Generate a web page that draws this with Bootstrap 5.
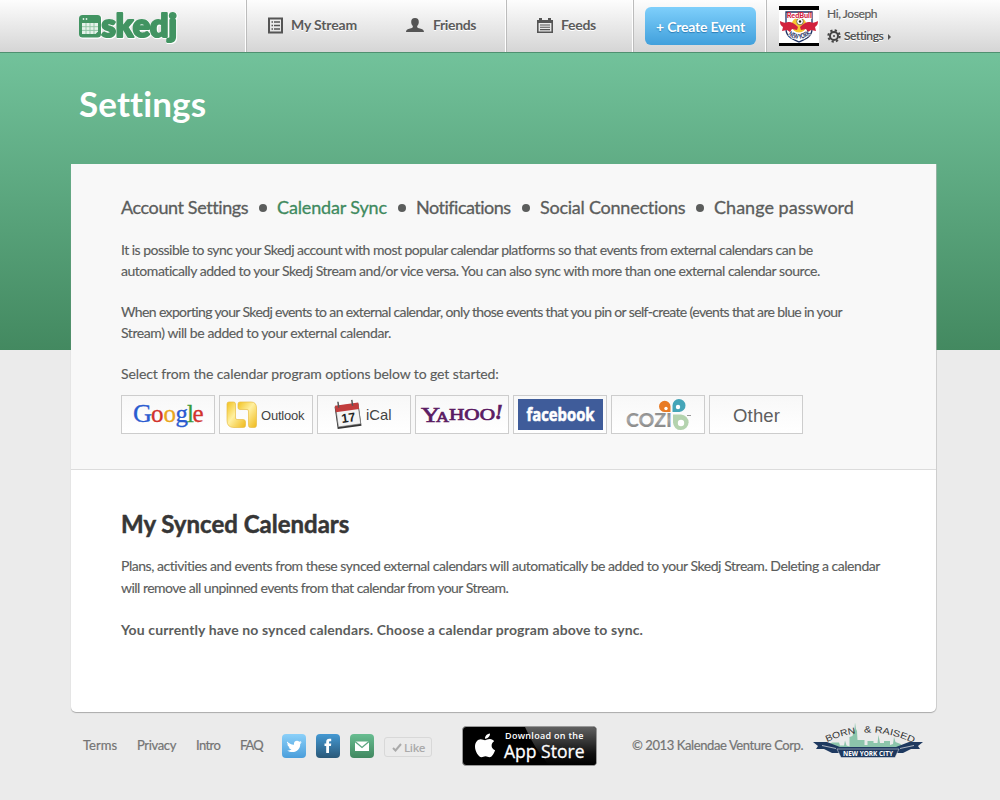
<!DOCTYPE html>
<html lang="en">
<head>
<meta charset="utf-8">
<meta name="viewport" content="width=device-width, initial-scale=1">
<title>Skedj - Settings</title>
<link rel="stylesheet" href="https://cdn.jsdelivr.net/npm/bootstrap@5.3.0/dist/css/bootstrap.min.css">
<style>
body{font-family:Lato,"Open Sans",sans-serif;background:#ebebeb;color:#5b5d5c;font-size:14px;line-height:21px;height:800px;overflow:hidden}
a{color:inherit;text-decoration:none}
svg{display:block;flex:none}
.topbar{height:53px;background:linear-gradient(#fdfdfd,#d5d5d5);border-bottom:1px solid #4f9070}
.brand{width:246px;padding:9px 0 0 78px}
.cell{border-left:1px solid #bcbcbc;box-shadow:-1px 0 0 #fff;font-weight:700;text-shadow:0 1px 0 #fff;color:#5b5b5b;height:52px}
.cell a{padding-top:15px;line-height:19px}
.c1{width:134px;padding-left:21px}.c2{width:126px;padding-left:26px}.c3{width:127px;padding-left:30px}.c4{width:133px;padding:7px 0 0 11px}
.plain{border:0;box-shadow:none}
.create{width:111px;height:38px;border-radius:6px;background:linear-gradient(#7ecffb,#41a0dc);color:#fff;text-shadow:0 1px 1px #2b7db5;font-size:14px;font-weight:700;letter-spacing:-.2px;border:0;padding:0;line-height:37px}
.user{padding:6px 0 0 12px;font-weight:400;font-size:12px;gap:8px}
.user .lh{line-height:15px;height:22px;-webkit-text-stroke:.2px}
.hero{height:297px;background:linear-gradient(#72c29b,#438960);padding:29px 0 0 79px}
.hero h1{font-size:35px;line-height:42px;font-weight:700;color:#fff;margin:0;letter-spacing:.12px}
.panel{width:865px;height:548px;margin:-186px 0 0 71px;background:#fff;border-radius:0 0 5px 5px;box-shadow:0 1px 1px #aaa,1px 0 0 #bbb8;position:relative}
.upper{height:306px;background:#f8f8f8;border-bottom:1px solid #dcdcdc;padding:32px 0 0 50px}
.tabs{font-size:18px;line-height:22px;height:22px;white-space:nowrap;-webkit-text-stroke:.3px}
.tabs a{display:block}
.tabs a.on{color:#3f8a5f}
.tabs i{width:8px;height:8px;border-radius:50%;background:#5b5d5c;margin-top:1px}
.ln{display:block;white-space:nowrap}
.upper .ln,.lower p:not(.fw-bold) .ln{-webkit-text-stroke:.15px}
.svc{width:94px;height:39px;border:1px solid #cdcdcd;background:linear-gradient(#f8f8f8,#fff)}
.lower{padding:40px 0 0 50px}
.lower h2{font-size:24px;line-height:28px;font-weight:700;color:#363636;margin:0 0 17px;-webkit-text-stroke:.5px}
.foot{font-size:13px;color:#747474;padding-left:83px;height:68px;white-space:nowrap}
.foot .ft{padding-bottom:2px;-webkit-text-stroke:.2px}
.sq{width:24px;height:24px;border-radius:4px}
</style>
</head>
<body>
<header class="topbar d-flex">
  <a class="brand" href="#" aria-label="skedj">
    <svg width="104" height="38" viewBox="0 0 104 38">
      <g style="filter:drop-shadow(0 1px 0 #fff) drop-shadow(1px 0 0 #fff)">
      <rect x="1" y="6" width="22" height="22.500" rx="3.500" fill="#429462"/>
      <path d="M4 14h16v8.500l-2.500 2.500H4z" fill="#e4f2e9"/>
      <path d="M8 14v11M12 14v11M16 14v11M4 17.700h16M4 21.400h16" stroke="#8cc3a2" stroke-width=".9"/>
      <circle cx="5.500" cy="10" r=".9" fill="#e4f2e9"/><circle cx="8.500" cy="10" r=".9" fill="#e4f2e9"/>
      <text x="23.500" y="27.500" font-size="32" font-weight="900" textLength="75.500" lengthAdjust="spacingAndGlyphs" fill="#429462" stroke="#429462" stroke-width="2.200" stroke-linejoin="round">skedj</text>
      </g>
    </svg>
  </a>
  <nav class="d-flex">
    <div class="cell c1"><a class="d-flex" href="#">
      <svg class="me-2" width="15" height="19" viewBox="0 0 15 19"><g transform="translate(0,2)"><path d="M1 1.500h13v14H1z" fill="none" stroke="#555" stroke-width="2"/><path d="M3.500 5h1.500M3.500 8.500h1.500M3.500 12h1.500M6 5h6M6 8.500h6M6 12h6" stroke="#555" stroke-width="1.600"/></g></svg>
      <span style="letter-spacing:-.15px">My Stream</span></a></div>
    <div class="cell c2 plain"><a class="d-flex" href="#">
      <svg width="18" height="17" viewBox="0 0 18 17" style="margin-right:9px"><path d="M9 3c2.600 0 4 1.600 3.800 4.200-.1 1.700-.8 2.800-1.600 3.700-.3 1.300.3 1.900 1.800 2.400 2.400.7 4.700 1 5 3.700H0c.3-2.700 2.600-3 5-3.700 1.500-.5 2.100-1.100 1.800-2.400-.8-.9-1.500-2-1.600-3.700C5 4.600 6.400 3 9 3z" fill="#555"/></svg>
      <span style="letter-spacing:-.37px">Friends</span></a></div>
    <div class="cell c3"><a class="d-flex" href="#">
      <svg width="16" height="18" viewBox="0 0 16 18" style="margin-right:8px"><path d="M0 5h2V3h3v2h6V3h3v2h2v3H0z" fill="#555"/><path d="M.8 8v9.200h14.400V8" fill="none" stroke="#555" stroke-width="1.600"/><path d="M3 10h10M3 12.300h10M3 14.600h10" stroke="#555" stroke-width="1.100"/></svg>
      <span style="letter-spacing:-.27px">Feeds</span></a></div>
    <div class="cell c4"><button class="btn create">+ Create Event</button></div>
    <div class="cell user d-flex">
      <svg width="40" height="40" viewBox="0 0 40 40"><path d="M0 0h40v40H0z"/><path d="M0 4h40v33H0z" fill="#fff"/>
        <path d="M7 6h26v17c0 8-7 10.500-13 13-6-2.500-13-5-13-13z" fill="#fff" stroke="#1f3264" stroke-width="1.300"/>
        <circle cx="20" cy="19" r="7.500" fill="#f7c531"/>
        <path d="M1 15c4 2 5 2 8 1 3-.5 6 1 10 5l-1 3-5-1-2 3-3-2-5 1 1-4c-3-2-3-4-3-7zM39 15c-4 2-5 2-8 1-3-.5-6 1-10 5l1 3 5-1 2 3 3-2 5 1-1-4c3-2 3-4 3-7z" fill="#d2213d"/>
        <circle cx="21" cy="15.500" r="3.300" fill="#fff" stroke="#333" stroke-width=".6"/><circle cx="21" cy="15.500" r="1.200" fill="#222"/>
        <text x="7.800" y="12.300" font-size="7.500" font-weight="900" fill="#d2213d" textLength="25" lengthAdjust="spacingAndGlyphs">RedBull</text>
        <path id="crest" d="M9 28.500q11 9.500 23-1" fill="none"/>
        <text font-size="7" font-weight="900" fill="#1f3264"><textPath href="#crest" textLength="25" lengthAdjust="spacingAndGlyphs">NEW YORK</textPath></text>
      </svg>
      <div>
        <div class="lh" style="letter-spacing:-.4px">Hi, Joseph</div>
        <a class="d-flex lh p-0 align-items-start" href="#" style="color:#444;letter-spacing:-.38px">
          <svg width="14" height="14" viewBox="0 0 14 14" style="margin:1px 3px 0 0"><circle cx="7" cy="7" r="4" fill="none" stroke="#444" stroke-width="2"/><circle cx="7" cy="7" r="5.700" fill="none" stroke="#444" stroke-width="2" stroke-dasharray="2.238 2.238"/><circle cx="7" cy="7" r="1" fill="#444"/></svg>
          <span>Settings</span>
          <svg width="3" height="6" viewBox="0 0 3 6" style="margin:6px 0 0 5px"><path d="M0 0l3 3-3 3z" fill="#555"/></svg>
        </a>
      </div>
    </div>
  </nav>
</header>
<section class="hero"><h1>Settings</h1></section>
<main class="panel">
  <section class="upper">
    <nav class="tabs d-flex align-items-center">
      <a href="#" style="letter-spacing:-.4px;width:138px">Account Settings</a><i></i>
      <a class="on" href="#" style="letter-spacing:-.14px;width:121px;margin-left:10px">Calendar Sync</a><i></i>
      <a href="#" style="letter-spacing:-.5px;width:106px;margin-left:10px">Notifications</a><i></i>
      <a href="#" style="letter-spacing:-.24px;width:156px;margin-left:10px">Social Connections</a><i></i>
      <a href="#" style="letter-spacing:.03px;margin-left:10px">Change password</a>
    </nav>
    <p class="mb-0" style="margin-top:21px">
      <span class="ln" style="letter-spacing:-.516px">It is possible to sync your Skedj account with most popular calendar platforms so that events from external calendars can be</span>
      <span class="ln" style="letter-spacing:-.458px">automatically added to your Skedj Stream and/or vice versa. You can also sync with more than one external calendar source.</span></p>
    <p class="mb-0" style="margin-top:20px">
      <span class="ln" style="letter-spacing:-.628px">When exporting your Skedj events to an external calendar, only those events that you pin or self-create (events that are blue in your</span>
      <span class="ln" style="letter-spacing:-.419px">Stream) will be added to your external calendar.</span></p>
    <p class="mb-0" style="margin-top:20px"><span class="ln" style="letter-spacing:-.106px">Select from the calendar program options below to get started:</span></p>
    <div class="d-flex gap-1" style="margin-top:11px">
      <a class="svc" href="#"><svg width="92" height="37"><g font-family="Liberation Serif,serif" font-size="25" stroke-width=".3"><text x="11" y="26" textLength="19" lengthAdjust="spacingAndGlyphs" fill="#2a5bd0" stroke="#2a5bd0">G</text><text x="29" y="26" fill="#d2322d" stroke="#d2322d">o</text><text x="41.500" y="26" fill="#eaa61c" stroke="#eaa61c">o</text><text x="53.500" y="26" fill="#2a5bd0" stroke="#2a5bd0">g</text><text x="65" y="26" fill="#3a9b3c" stroke="#3a9b3c">l</text><text x="70.500" y="26" fill="#d2322d" stroke="#d2322d">e</text></g></svg></a>
      <a class="svc" href="#"><svg width="92" height="37"><defs><linearGradient id="gold" x2="1" y2="1"><stop stop-color="#f2c21f"/><stop offset=".45" stop-color="#fff0a0"/><stop offset="1" stop-color="#efb91a"/></linearGradient></defs><path d="M9 6h4.500q2 0 2 2v14q0 1.500 1.500 1.500h6q2.500 0 2.500 2.500v3.500q0 2-2 2H14q-7 0-7-7V8q0-2 2-2z" fill="url(#gold)" stroke="#e8bd45" stroke-width=".7"/><path d="M20 6h11q5.500 0 5.500 6v17q0 2.500-2 2.500h-4q-2 0-2-2V15q0-1.500-1.500-1.500H20q-2 0-2-2V8q0-2 2-2z" fill="url(#gold)" stroke="#e8bd45" stroke-width=".7"/><text x="41" y="24" font-family="Liberation Sans,sans-serif" font-size="13" fill="#444" textLength="43.500">Outlook</text></svg></a>
      <a class="svc" href="#"><svg width="92" height="37"><g transform="rotate(-8 30 20)"><path d="M18 9h24v22.500H18z" fill="#333"/><path d="M19 9h22.500v20.500H19z" fill="#f4f4f4" stroke="#777" stroke-width=".6"/><path d="M18.500 8h23.500v6.500H18.500z" fill="#c23c3c"/><path d="M22 4.500v6M36 4.500v6" stroke="#555" stroke-width="1.500"/><text x="23" y="26" font-family="Liberation Sans,sans-serif" font-weight="700" font-size="12.500" fill="#222" textLength="14">17</text></g><text x="48" y="24" font-family="Liberation Sans,sans-serif" font-size="14.500" fill="#444" textLength="25.500" lengthAdjust="spacingAndGlyphs">iCal</text></svg></a>
      <a class="svc" href="#"><svg width="92" height="37"><g font-family="Liberation Serif,serif" fill="#5b1c63" stroke="#5b1c63" stroke-width=".7"><text x="5" y="26" font-size="21.500" textLength="19" lengthAdjust="spacingAndGlyphs">Y</text><text x="20" y="25.500" font-size="15" textLength="13" lengthAdjust="spacingAndGlyphs">A</text><text x="33" y="24" font-size="16" textLength="46" lengthAdjust="spacingAndGlyphs">HOO</text><text x="79" y="23" font-size="20" font-weight="700" font-style="italic">!</text></g></svg></a>
      <a class="svc" href="#"><svg width="92" height="37"><path d="M4 3h85v31H4z" fill="#3f5c9a"/><text x="12.500" y="25" font-family="Open Sans,sans-serif" font-weight="700" font-size="18" fill="#fff" stroke="#fff" stroke-width=".6" textLength="68" lengthAdjust="spacingAndGlyphs">facebook</text></svg></a>
      <a class="svc" href="#"><svg width="92" height="37"><defs><linearGradient id="steel" x2="0" y2="1"><stop stop-color="#777"/><stop offset=".5" stop-color="#aaa"/><stop offset="1" stop-color="#777"/></linearGradient></defs><text x="14" y="31" font-family="Lato,sans-serif" font-weight="900" font-size="19.500" fill="url(#steel)" textLength="46" lengthAdjust="spacingAndGlyphs">COZI</text><path d="M47 10.500a5.700 5.700 0 1 1 11.500 0V16H53a5.700 5.700 0 0 1-6-5.500z" fill="#e87b25"/><path d="M60.500 16V9.500a6.500 6.500 0 1 1 7 6.500z" fill="#45a5b8"/><path d="M61 18.500h8a7.800 7.800 0 1 1-8 8z" fill="#b4d3ae"/><circle cx="54" cy="12.500" r="1.700" fill="#fff"/><circle cx="66" cy="11" r="2.200" fill="#fff"/><circle cx="69" cy="27" r="3.200" fill="#fff"/><path d="M75 19.500h4" stroke="#999"/></svg></a>
      <a class="svc" href="#"><svg width="92" height="37"><text x="23" y="26" font-family="Liberation Sans,sans-serif" font-size="18.500" fill="#5e5e5e" textLength="47">Other</text></svg></a>
    </div>
  </section>
  <section class="lower">
    <h2>My Synced Calendars</h2>
    <p class="mb-0" style="line-height:22px">
      <span class="ln" style="letter-spacing:-.455px">Plans, activities and events from these synced external calendars will automatically be added to your Skedj Stream. Deleting a calendar</span>
      <span class="ln" style="letter-spacing:-.52px">will remove all unpinned events from that calendar from your Stream.</span></p>
    <p class="fw-bold mb-0" style="margin-top:20px"><span class="ln" style="letter-spacing:.12px">You currently have no synced calendars. Choose a calendar program above to sync.</span></p>
  </section>
</main>
<footer class="foot d-flex align-items-center">
  <a class="ft" href="#" style="width:54px">Terms</a>
  <a class="ft" href="#" style="width:59px;letter-spacing:-.35px">Privacy</a>
  <a class="ft" href="#" style="width:44px;letter-spacing:-.6px">Intro</a>
  <a class="ft" href="#" style="width:42px;letter-spacing:-1px">FAQ</a>
  <a href="#" class="sq" style="background:linear-gradient(#8bd0f9,#4a9edb);margin-right:10px" aria-label="Twitter"><svg width="24" height="24" viewBox="0 0 24 24"><path d="M5 7.500c2 2 4 3 7 3.200-.4-2.500 1-4 3-4 1 0 1.700.4 2.300 1l2-.7-1 1.600 1.500-.3-1.600 1.600c.2 4.500-3.200 8.200-7.700 8.200-2 0-3.700-.5-5.200-1.500 1.700.1 3-.3 4.200-1.300-1.500-.1-2.300-.9-2.800-2h1.200C6.400 12.800 5.500 11.700 5.400 10l1.300.4C5.200 9.500 4.600 8.500 5 7.500z" fill="#fff"/></svg></a>
  <a href="#" class="sq" style="background:linear-gradient(#4499d3,#2a5878);margin-right:10px" aria-label="Facebook"><svg width="24" height="24" viewBox="0 0 24 24"><path d="M10.200 19v-7H8.500V9.500h1.700V8c0-2.300 1.200-3.200 3-3.200h2v2.500H14c-.7 0-1 .3-1 1v1.200h2.200L15 12h-2v7z" fill="#fff"/></svg></a>
  <a href="#" class="sq" style="background:linear-gradient(#68bd91,#418860);margin-right:10px" aria-label="Email"><svg width="24" height="24" viewBox="0 0 24 24"><path d="M5 7.500h14V17H5z" fill="#fff"/><path d="M5 7.500l7 6 7-6" fill="none" stroke="#5ba680" stroke-width="1.300"/></svg></a>
  <a href="#" class="d-flex align-items-center" style="width:48px;height:20px;margin-top:2px;border:1px solid #d8d8d8;border-radius:3px;padding-left:7px;color:#aaa;font-size:11.500px;font-weight:600;font-family:'Open Sans',sans-serif;letter-spacing:-.4px"><svg width="10" height="9" viewBox="0 0 10 9" style="margin-right:2px"><path d="M1 5l2.500 2.500L9 1" fill="none" stroke="#aaa" stroke-width="2"/></svg>Like</a>
  <a href="#" style="margin-left:30px" aria-label="App Store"><svg width="135" height="40" viewBox="0 0 135 40"><defs><linearGradient id="gloss" x2="0" y2="1"><stop stop-color="#606060"/><stop offset=".7" stop-color="#111"/><stop offset="1"/></linearGradient></defs><rect x=".5" y=".5" width="134" height="39" rx="3.500" fill="#000" stroke="#999"/><path d="M63 1h68q3 0 3 3v32q0 3-3 3H87Q72 22 63 1z" fill="url(#gloss)"/>
    <path d="M29.500 6.500c.2 2.700-2.300 5.300-5 5.200-.2-2.700 2.300-5.100 5-5.200zM24.500 13.200c1.200 0 2.800-1.300 5-1.200 1.800.1 3.200.9 4.100 2.200-3.800 2.600-3 7.500 1 9-1.200 3.400-3.300 7-5.600 7-1.500 0-2.300-.9-4-.9s-2.600.9-4 .9c-3 0-6.500-6-6.500-10.500 0-4.800 3-7.500 5.700-7.500 1.800 0 3.200 1 4.300 1z" fill="#fff" transform="translate(-1.500 1)"/>
    <g fill="#fff" font-family="Open Sans,sans-serif"><text x="43" y="13" font-size="9" font-weight="600" textLength="78.500">Download on the</text><text x="42" y="32" font-size="18" font-weight="500" textLength="80.500" stroke="#fff" stroke-width=".3" lengthAdjust="spacingAndGlyphs">App Store</text></g></svg></a>
  <span class="ft" style="margin-left:35px;width:181px;letter-spacing:-.4px">© 2013 Kalendae Venture Corp.</span>
  <svg width="110" height="38" viewBox="0 -3 110 38" style="margin-top:-12px" aria-label="Born &amp; Raised New York City">
    <path d="M15 21l4-2.500h7l1 3h4l1-5 1.500 5 3 1V13l3-1 1-5 1-2 .5-6.500 1 6.500 1 2 .5 9h7v5h3v-4h6v2h4l1-8 1.500 8h4v-2h6v4l3-1 1-7 1.500 5 5 2 3 3-14 6H30l-12-4z" fill="#8cc5ab"/>
    <path d="M0 18h14l13 5h56l13-5h14l-5 4 2 3h-9l-8 4h-9l-2 4H30l-2-4h-9l-8-4H3l2-3z" fill="#1e3960"/>
    <path d="M9 21.500l14 3M101 21.500l-14 3" stroke="#ebebeb" stroke-width=".7"/>
    <path d="M24 25h62l-4 8.500H28z" fill="#1e3960" stroke="#ebebeb" stroke-width=".5"/>
    <path id="arc" d="M14 18Q55 -1 98 18" fill="none"/>
    <g font-family="Liberation Sans,sans-serif" font-size="9" fill="#333"><text><textPath href="#arc" textLength="30" lengthAdjust="spacingAndGlyphs">BORN</textPath></text>
    <text><textPath href="#arc" startOffset="38.500" textLength="51" lengthAdjust="spacingAndGlyphs">&amp; RAISED</textPath></text></g>
    <text x="30" y="32" font-family="Open Sans,sans-serif" font-size="7" font-weight="700" fill="#fff" textLength="50" lengthAdjust="spacingAndGlyphs">NEW YORK CITY</text>
  </svg>
</footer>
<script src="https://cdn.jsdelivr.net/npm/bootstrap@5.3.0/dist/js/bootstrap.bundle.min.js"></script>
</body>
</html>
